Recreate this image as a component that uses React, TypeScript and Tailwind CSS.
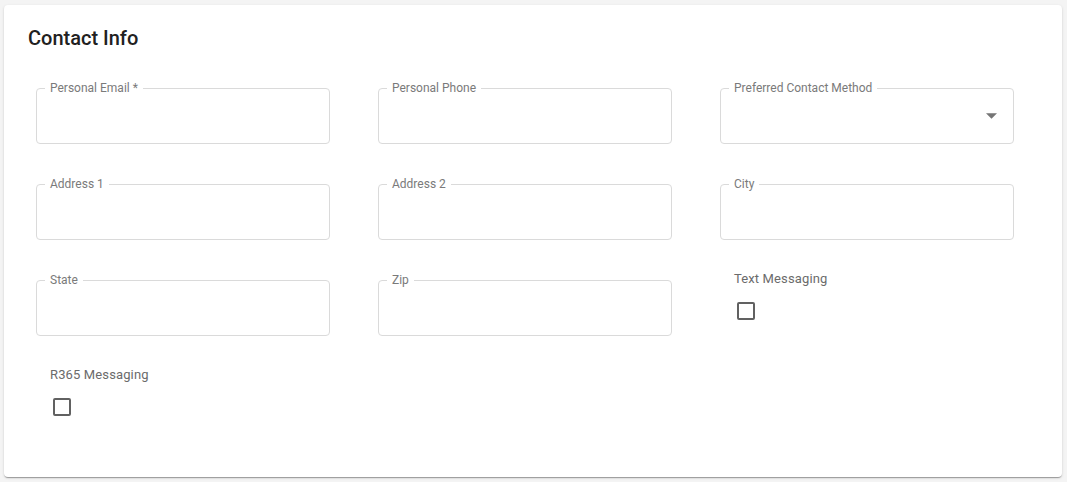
import { ReactNode } from 'react'

function OutlinedField({ label, select = false }: { label: string; select?: boolean }) {
  return (
    <div className="h-24 pt-2">
      <div className="relative h-14 rounded-[4px] border border-[#dadada]">
        <span className="absolute -top-[9px] left-[8px] bg-white px-[5px] text-[12px] leading-4 text-[#7a7a7a]">
          {label}
        </span>
        {select && (
          <svg
            className="absolute right-[16px] top-[24px]"
            width="11"
            height="6"
            viewBox="0 0 10 5"
          >
            <path d="M0 0 L5 5 L10 0 Z" fill="#757575" />
          </svg>
        )}
      </div>
    </div>
  )
}

function CheckboxField({ label }: { label: string }) {
  return (
    <div className="h-24">
      <div className="-mt-px pl-[14px] text-[13px] leading-4 tracking-[0.01em] text-[#6b6b6b]">{label}</div>
      <div className="ml-[17px] mt-[15px] h-[18px] w-[18px] rounded-[2px] border-2 border-[#616161]" />
    </div>
  )
}

function Grid({ children }: { children: ReactNode }) {
  return <div className="grid grid-cols-[294px_294px_294px] gap-x-12 pl-8">{children}</div>
}

export default function App() {
  return (
    <div
      className="min-h-[482px] w-[1067px] bg-[#f4f4f4] pl-[4px] pt-[5px]"
      style={{ fontFamily: 'Roboto, "Liberation Sans", sans-serif' }}
    >
      <div className="w-[1058px] rounded-[4px] bg-white pb-[13px] pt-[21px] shadow-[0_2px_1px_-1px_rgba(0,0,0,0.2),0_1px_1px_0_rgba(0,0,0,0.14),0_1px_3px_0_rgba(0,0,0,0.12)]">
        <h2 className="pl-6 text-[20px] font-medium leading-6 text-[#212121]">Contact Info</h2>
        <div className="mt-[30px]">
          <Grid>
            <OutlinedField label="Personal Email *" />
            <OutlinedField label="Personal Phone" />
            <OutlinedField label="Preferred Contact Method" select />
            <OutlinedField label="Address 1" />
            <OutlinedField label="Address 2" />
            <OutlinedField label="City" />
            <OutlinedField label="State" />
            <OutlinedField label="Zip" />
            <CheckboxField label="Text Messaging" />
            <CheckboxField label="R365 Messaging" />
          </Grid>
        </div>
      </div>
    </div>
  )
}
